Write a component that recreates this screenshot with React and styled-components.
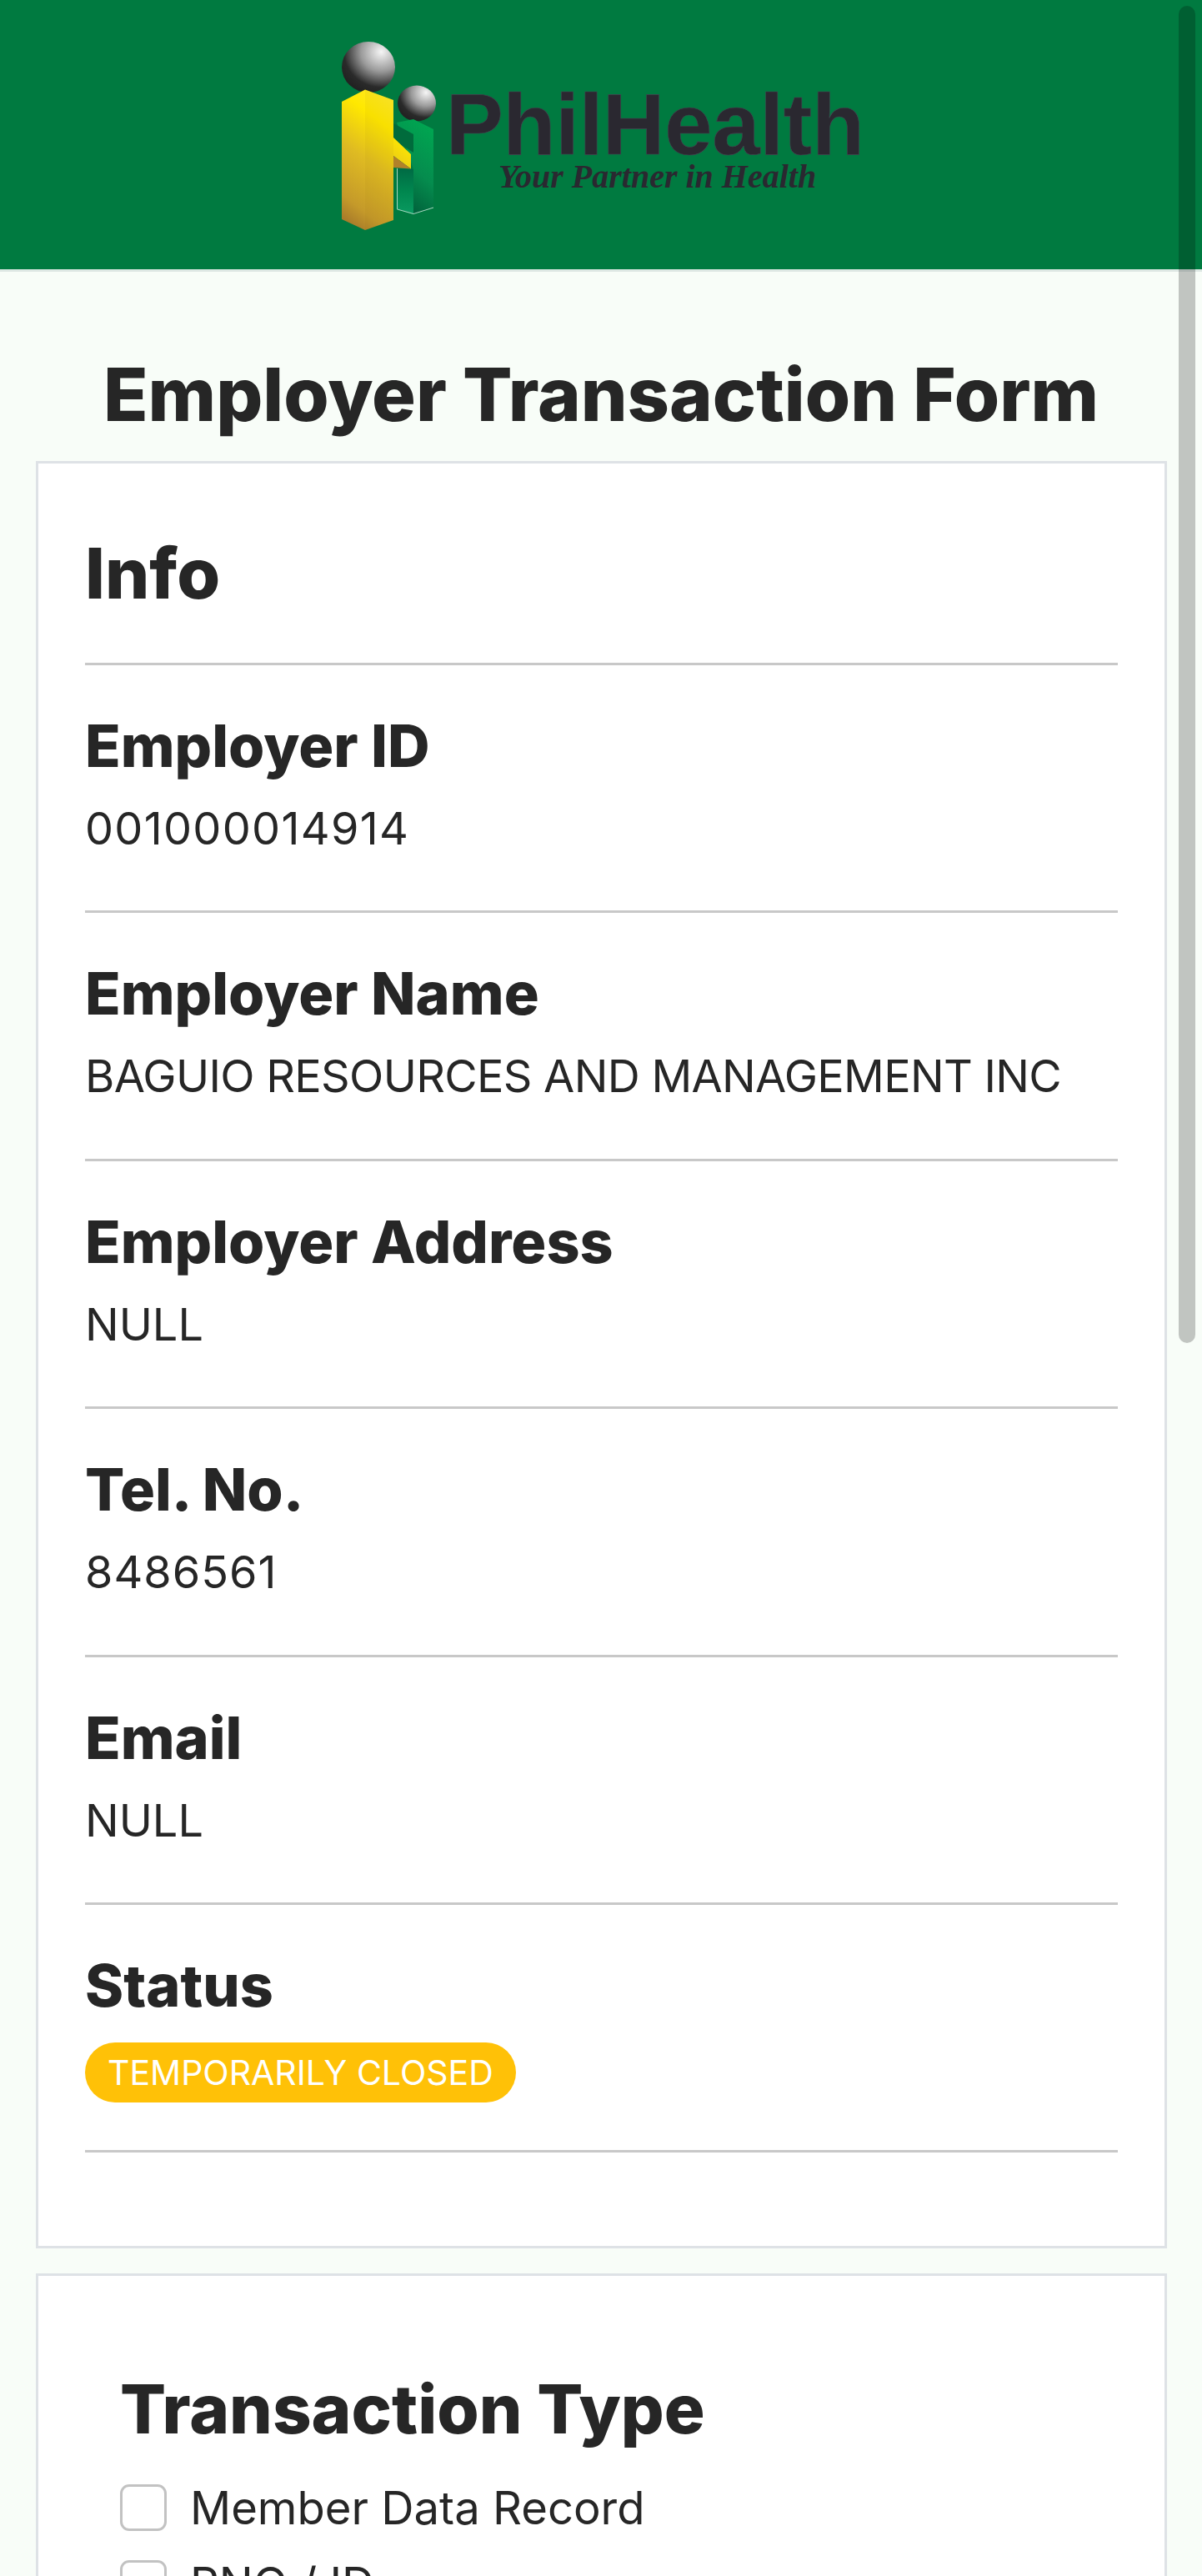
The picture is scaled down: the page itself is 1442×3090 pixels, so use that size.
import React from 'react';
import styled, { createGlobalStyle } from 'styled-components';

const Global = createGlobalStyle`
  html, body { margin: 0; padding: 0; background: #f8fdf8; }
  body { font-family: "Inter", "Liberation Sans", sans-serif; color: #262626; }
  * { box-sizing: border-box; }
`;

const Page = styled.div`
  position: relative;
  width: 1442px;
  height: 3090px;
  overflow: hidden;
  background: #f8fdf8;
`;

const Header = styled.header`
  height: 326px;
  background: #007a40;
  border-bottom: 3px solid #dee8e4;
  display: flex;
  justify-content: center;
  align-items: flex-start;
  padding-left: 2px;
`;

const Logo = styled.svg`
  display: block;
  width: 640px;
  height: 322px;
  flex: none;
`;

const Title = styled.h1`
  margin: 0;
  padding-top: 97px;
  height: 227px;
  text-align: center;
  font-size: 88px;
  line-height: 100px;
  font-weight: 800;
`;

const Card = styled.section`
  margin: 0 42px 30px 43px;
  background: #fff;
  border: 3.5px solid #dee2e6;
`;

const InfoCard = styled(Card)`
  height: 2144px;
  padding: 0 56px;
`;

const CardTitle = styled.h2`
  margin: 0;
  height: 242px;
  padding-top: 82px;
  font-size: 84px;
  line-height: 100px;
  font-weight: 800;
  border-bottom: 3px solid #c8c8c8;
`;

const Row = styled.div`
  height: 297.4px;
  padding-top: 57px;
  border-bottom: 3px solid #c8c8c8;
`;

const Label = styled.div`
  font-size: 70px;
  line-height: 80px;
  font-weight: 800;
`;

const Value = styled.div`
  margin-top: 19px;
  font-size: 54px;
  line-height: 80px;
  font-weight: 400;
  letter-spacing: ${(p) => p.$tracking || 0}px;
`;

const Badge = styled.span`
  display: inline-flex;
  align-items: center;
  height: 72px;
  margin-top: 28px;
  padding: 0 27px;
  border-radius: 36px;
  background: #ffc107;
  color: #fff;
  font-size: 41px;
  font-weight: 400;
`;

const TypeCard = styled(Card)`
  padding: 110px 0 0 98px;
  height: 600px;
`;

const TypeTitle = styled.h2`
  margin: 0 0 22px;
  font-size: 81.5px;
  line-height: 100px;
  font-weight: 800;
`;

const CheckRow = styled.label`
  display: flex;
  align-items: center;
  gap: 28px;
  height: 91px;
  font-size: 54.4px;
`;

const Box = styled.span`
  width: 56px;
  height: 56px;
  flex: none;
  background: #fff;
  border: 3px solid #c2c2c2;
  border-radius: 11px;
`;

const ScrollThumb = styled.div`
  position: absolute;
  top: 7px;
  right: 8px;
  width: 20px;
  height: 1604px;
  border-radius: 10px;
  background: rgba(0, 0, 0, 0.22);
`;

const PhilText = styled.text`
  font-family: "Liberation Sans", Arial, sans-serif;
  font-size: 103px;
  font-weight: 700;
  fill: #2a2830;
  stroke: #454350;
  stroke-width: 0.6;
  letter-spacing: -0.2px;
`;

const TagText = styled.text`
  font-family: "Liberation Serif", "Times New Roman", serif;
  font-size: 40px;
  font-style: italic;
  font-weight: 700;
  fill: #2a2830;
`;

const rows = [
  ['Employer ID', '001000014914', 1.3],
  ['Employer Name', 'BAGUIO RESOURCES AND MANAGEMENT INC', -0.7],
  ['Employer Address', 'NULL', 0],
  ['Tel. No.', '8486561', 1],
  ['Email', 'NULL', 0],
];

function PhilHealthLogo() {
  return (
    <Logo viewBox="0 0 640 322" aria-label="PhilHealth">
      <defs>
        <radialGradient id="ball" cx="0.74" cy="0.2" r="0.85">
          <stop offset="0" stopColor="#f6f6f6" />
          <stop offset="0.45" stopColor="#9a9a9a" />
          <stop offset="0.82" stopColor="#2a2a2a" />
          <stop offset="1" stopColor="#222" />
        </radialGradient>
        <linearGradient id="yel" x1="0.6" y1="0.05" x2="0.25" y2="1">
          <stop offset="0" stopColor="#ffe920" />
          <stop offset="0.18" stopColor="#ffe800" />
          <stop offset="0.5" stopColor="#dfbb22" />
          <stop offset="0.85" stopColor="#c59a2a" />
          <stop offset="1" stopColor="#a97c2a" />
        </linearGradient>
        <linearGradient id="grnRight" x1="0.7" y1="0" x2="0.4" y2="1">
          <stop offset="0" stopColor="#00a651" />
          <stop offset="0.55" stopColor="#058c4e" />
          <stop offset="1" stopColor="#005f3a" />
        </linearGradient>
        <linearGradient id="grnLeft" x1="0.5" y1="0" x2="0.5" y2="1">
          <stop offset="0" stopColor="#006a44" />
          <stop offset="0.5" stopColor="#00874f" />
          <stop offset="1" stopColor="#0a9a60" />
        </linearGradient>
      </defs>
      {/* coordinates are page px; the svg box starts at x=402 */}
      <g transform="translate(-402 0)">
        <ellipse cx="442" cy="80.5" rx="32" ry="30.5" fill="url(#ball)" />
        <ellipse cx="500" cy="124" rx="23" ry="21.5" fill="url(#ball)" />
        <polygon points="476,147 496,143 520,155 520,249 496,257 496,203" fill="url(#grnRight)" />
        <polygon points="472,148 496,161 496,183 472,168" fill="#006b3c" />
        <polygon points="476,202 496,203 496,257 476,251" fill="url(#grnLeft)" />
        <polyline points="476.5,202 476.5,251 496,256.5 520,249" fill="none" stroke="#a8d8bf" strokeWidth="1" />
        <polygon points="410,122 438,107.5 472,120 472,165 493,185 493,202.5 472,187 472,264 438,276 410,263" fill="url(#yel)" />
        <polygon points="438,107.5 472,120 472,264 438,276" fill="#8a6a10" opacity="0.06" />
        <polygon points="472,187 493,202.5 472,201" fill="#b1812a" />
      </g>
      <PhilText x="133" y="185">PhilHealth</PhilText>
      <TagText x="196" y="225">Your Partner in Health</TagText>
    </Logo>
  );
}

export default function App() {
  return (
    <Page>
      <Global />
      <Header>
        <PhilHealthLogo />
      </Header>
      <Title>Employer Transaction Form</Title>
      <InfoCard>
        <CardTitle>Info</CardTitle>
        {rows.map(([label, value, tracking]) => (
          <Row key={label}>
            <Label>{label}</Label>
            <Value $tracking={tracking}>{value}</Value>
          </Row>
        ))}
        <Row>
          <Label>Status</Label>
          <Badge>TEMPORARILY CLOSED</Badge>
        </Row>
      </InfoCard>
      <TypeCard>
        <TypeTitle>Transaction Type</TypeTitle>
        <CheckRow><Box />Member Data Record</CheckRow>
        <CheckRow><Box />PNO / ID</CheckRow>
      </TypeCard>
      <ScrollThumb />
    </Page>
  );
}
